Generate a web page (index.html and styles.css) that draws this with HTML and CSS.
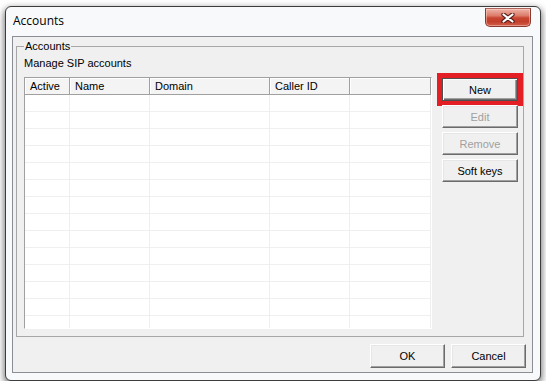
FILE: index.html
```html
<!DOCTYPE html>
<html>
<head>
<meta charset="utf-8">
<link rel="stylesheet" href="styles.css">
</head>
<body>
<div class="window">
  <div class="titlebar">
    <span class="title">Accounts</span>
    <button class="close" aria-label="Close">
      <svg width="14" height="10" viewBox="0 0 14 10">
        <path d="M2.5 1.5 L11.5 8.5 M11.5 1.5 L2.5 8.5" stroke="#5b2118" stroke-width="4.4" stroke-linecap="round" fill="none"/>
        <path d="M2.5 1.5 L11.5 8.5 M11.5 1.5 L2.5 8.5" stroke="#ffffff" stroke-width="2.2" stroke-linecap="round" fill="none"/>
      </svg>
    </button>
  </div>
  <div class="client">
    <fieldset class="group">
      <legend>Accounts</legend>
      <div class="caption">Manage SIP accounts</div>
      <div class="group-body">
        <div class="list">
          <table>
            <colgroup><col class="c1"><col class="c2"><col class="c3"><col class="c4"><col class="c5"></colgroup>
            <thead><tr><th>Active</th><th>Name</th><th>Domain</th><th>Caller ID</th><th></th></tr></thead>
            <tbody>
              <tr><td></td><td></td><td></td><td></td><td></td></tr>
              <tr><td></td><td></td><td></td><td></td><td></td></tr>
              <tr><td></td><td></td><td></td><td></td><td></td></tr>
              <tr><td></td><td></td><td></td><td></td><td></td></tr>
              <tr><td></td><td></td><td></td><td></td><td></td></tr>
              <tr><td></td><td></td><td></td><td></td><td></td></tr>
              <tr><td></td><td></td><td></td><td></td><td></td></tr>
              <tr><td></td><td></td><td></td><td></td><td></td></tr>
              <tr><td></td><td></td><td></td><td></td><td></td></tr>
              <tr><td></td><td></td><td></td><td></td><td></td></tr>
              <tr><td></td><td></td><td></td><td></td><td></td></tr>
              <tr><td></td><td></td><td></td><td></td><td></td></tr>
              <tr><td></td><td></td><td></td><td></td><td></td></tr>
              <tr><td></td><td></td><td></td><td></td><td></td></tr>
            </tbody>
          </table>
        </div>
        <div class="side-buttons">
          <button class="btn btn-default highlight">New</button>
          <button class="btn" disabled>Edit</button>
          <button class="btn" disabled>Remove</button>
          <button class="btn">Soft keys</button>
        </div>
      </div>
    </fieldset>
    <div class="dialog-buttons">
      <button class="btn btn-dialog">OK</button>
      <button class="btn btn-dialog">Cancel</button>
    </div>
  </div>
</div>
</body>
</html>
```
FILE: styles.css
```css
* { box-sizing: border-box; }

body {
  margin: 0;
  background: #ffffff;
  font-family: "Liberation Sans", Arial, sans-serif;
  font-size: 11px;
  color: #000;
}

.window {
  margin: 6px 0 0 5px;
  width: 536px;
  height: 375px;
  border: 1px solid #3d3d3d;
  border-radius: 6px;
  background: #f8f9fa;
  box-shadow: 0 3px 7px 1px rgba(0, 0, 0, 0.55);
  padding: 0 7px 7px 6px;
  display: flex;
  flex-direction: column;
}

.titlebar {
  height: 29px;
  flex: none;
  display: flex;
  justify-content: space-between;
  align-items: flex-start;
  padding: 0 2px 0 1px;
}

.title {
  font-family: "Open Sans", "Noto Sans", sans-serif;
  font-size: 12px;
  line-height: 16px;
  margin-top: 6px;
  color: #000;
}

.close {
  margin-top: 1px;
  width: 46px;
  height: 19px;
  padding: 0;
  border: 1px solid #8a3a30;
  border-top-color: #b0655a;
  border-radius: 0 0 5px 5px;
  background: linear-gradient(#eeb3a8 0%, #dc7b69 40%, #c84631 52%, #c2402b 75%, #d3614c 100%);
  box-shadow: inset 0 0 0 1px rgba(255, 220, 210, 0.45);
  display: flex;
  align-items: center;
  justify-content: center;
}

.close svg { display: block; }

.client {
  flex: 1;
  border: 1px solid #8b8e94;
  background: #f0f0f0;
  display: flex;
  flex-direction: column;
}

.group {
  margin: 3px 8px 0 3px;
  padding: 4px 5px 7px 7px;
  border: 1px solid #a7a7a7;
  min-width: 0;
}

.group legend {
  padding: 0 1px;
  line-height: 13px;
}

.caption {
  line-height: 13px;
  margin-bottom: 7px;
}

.group-body {
  display: flex;
  align-items: flex-start;
  gap: 10px;
}

.list {
  width: 408px;
  height: 252px;
  background: #ffffff;
  border: 1px solid;
  border-color: #a0a0a0 #ffffff #ffffff #a0a0a0;
  overflow: hidden;
  flex: none;
}

.list table {
  border-collapse: separate;
  border-spacing: 0;
  table-layout: fixed;
  width: 406px;
}

.c1 { width: 45px; }
.c2 { width: 80px; }
.c3 { width: 120px; }
.c4 { width: 80px; }
.c5 { width: 81px; }

.list th {
  height: 17px;
  padding: 0 5px;
  text-align: left;
  font-weight: normal;
  line-height: 15px;
  background: #f4f4f4;
  border-right: 1px solid #a0a0a0;
  border-bottom: 1px solid #a0a0a0;
  box-shadow: inset 1px 1px 0 #ffffff;
  white-space: nowrap;
}

.list td {
  height: 17px;
  padding: 0;
  border-right: 1px solid #efefef;
  border-bottom: 1px solid #efefef;
}

.side-buttons {
  display: flex;
  flex-direction: column;
  gap: 4px;
  margin-top: 1px;
}

.btn {
  font: inherit;
  width: 76px;
  height: 23px;
  padding: 0;
  color: #000;
  background: #f0f0f0;
  border: 1px solid;
  border-color: #ffffff #6b6b6b #6b6b6b #ffffff;
  box-shadow: inset -1px -1px 0 #a0a0a0, inset 1px 1px 0 #e6e6e6;
}

.btn:disabled {
  color: #a0a0a0;
}

.btn-default {
  border-color: #505050;
  box-shadow: inset 1px 1px 0 #ffffff, inset -1px -1px 0 #6b6b6b, inset -2px -2px 0 #a0a0a0;
}

.highlight {
  outline: 5px solid #e31e25;
  outline-offset: 0;
}

.dialog-buttons {
  display: flex;
  justify-content: flex-end;
  gap: 6px;
  margin-top: 7px;
  padding-right: 6px;
}

.btn-dialog {
  width: 75px;
  height: 24px;
}
```
